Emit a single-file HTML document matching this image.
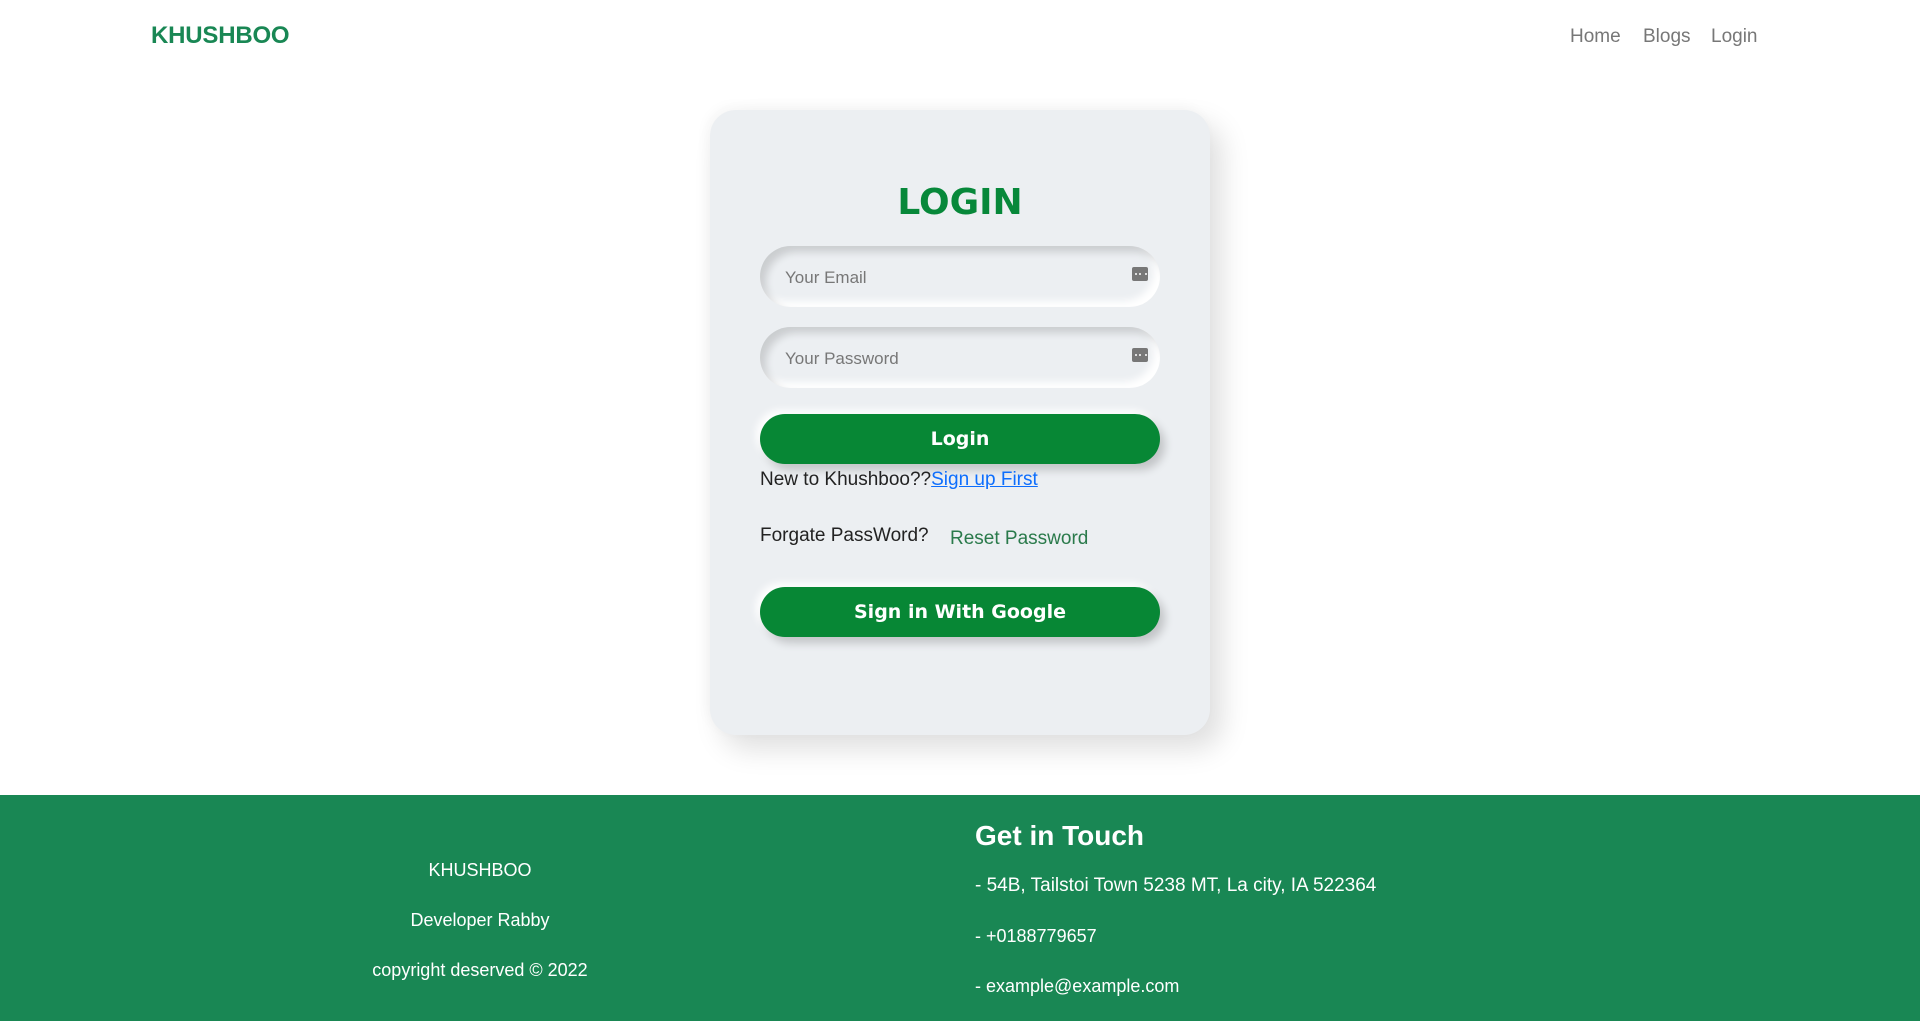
<!DOCTYPE html>
<html><head><meta charset="utf-8"><style>
*{margin:0;padding:0;box-sizing:border-box}
body{width:1920px;height:1021px;overflow:hidden;background:#fff;font-family:"Liberation Sans",sans-serif;position:relative}
.a{position:absolute;white-space:nowrap}
.logo{left:151px;top:22px;font-size:24px;font-weight:bold;color:#198754;letter-spacing:-0.2px}
.nav{top:26px;font-size:19px;color:#777}
.card{left:710px;top:110px;width:500px;height:625px;background:#eceff2;border-radius:26px;box-shadow:12px 14px 28px rgba(0,0,0,.13),-4px -4px 12px rgba(0,0,0,.03)}
.h{left:710px;width:500px;top:182px;text-align:center;font-family:"DejaVu Sans",sans-serif;font-weight:bold;font-size:36px;color:#07883a;letter-spacing:0}
.inp{left:760px;width:400px;height:61px;border-radius:31px;background:#eceff2;box-shadow:inset 6px 6px 8px rgba(0,0,0,.14),inset -6px -6px 8px #fff}
.inp span{position:absolute;left:25px;top:22px;font-size:17px;color:#777}
.inp i{position:absolute;left:372px;top:21px;width:16px;height:14px;background:#777;border-radius:2px}
.inp i:after{content:"";position:absolute;left:3px;top:6px;width:8px;height:2px;border-left:2px solid #ddd;border-right:2px solid #ddd;background:linear-gradient(90deg,transparent 2px,#ddd 2px,#ddd 4px,transparent 4px)}
.btn{left:760px;width:400px;height:50px;border-radius:25px;background:#078735;color:#fff;font-family:"DejaVu Sans",sans-serif;font-weight:bold;font-size:19px;text-align:center;line-height:50px;box-shadow:5px 6px 9px rgba(0,0,0,.18),-4px -4px 8px #fff}
.t{font-size:19px;color:#222}
footer{position:absolute;left:0;top:795px;width:1920px;height:226px;background:#198754;color:#fff}
.f{font-size:18px;color:#fff}
</style></head><body>
<div class="a logo">KHUSHBOO</div>
<div class="a nav" style="left:1570px">Home</div>
<div class="a nav" style="left:1643px">Blogs</div>
<div class="a nav" style="left:1711px">Login</div>
<div class="a card"></div>
<div class="a h">LOGIN</div>
<div class="a inp" style="top:246px"><span>Your Email</span><i></i></div>
<div class="a inp" style="top:327px"><span>Your Password</span><i></i></div>
<div class="a btn" style="top:414px">Login</div>
<div class="a t" style="left:760px;top:469px">New to Khushboo??<span style="color:#0d6efd;text-decoration:underline">Sign up First</span></div>
<div class="a t" style="left:760px;top:525px">Forgate PassWord?</div>
<div class="a t" style="left:950px;top:528px;color:#2a7a4b">Reset Password</div>
<div class="a btn" style="top:587px">Sign in With Google</div>
<footer>
<div class="a f" style="left:280px;width:400px;text-align:center;top:65px">KHUSHBOO</div>
<div class="a f" style="left:280px;width:400px;text-align:center;top:115px">Developer Rabby</div>
<div class="a f" style="left:280px;width:400px;text-align:center;top:165px">copyright deserved © 2022</div>
<div class="a" style="left:975px;top:25px;font-size:28px;font-weight:bold;color:#fff">Get in Touch</div>
<div class="a f" style="left:975px;top:80px;font-size:19px">- 54B, Tailstoi Town 5238 MT, La city, IA 522364</div>
<div class="a f" style="left:975px;top:131px">- +0188779657</div>
<div class="a f" style="left:975px;top:181px">- example@example.com</div>
</footer>
</body></html>
